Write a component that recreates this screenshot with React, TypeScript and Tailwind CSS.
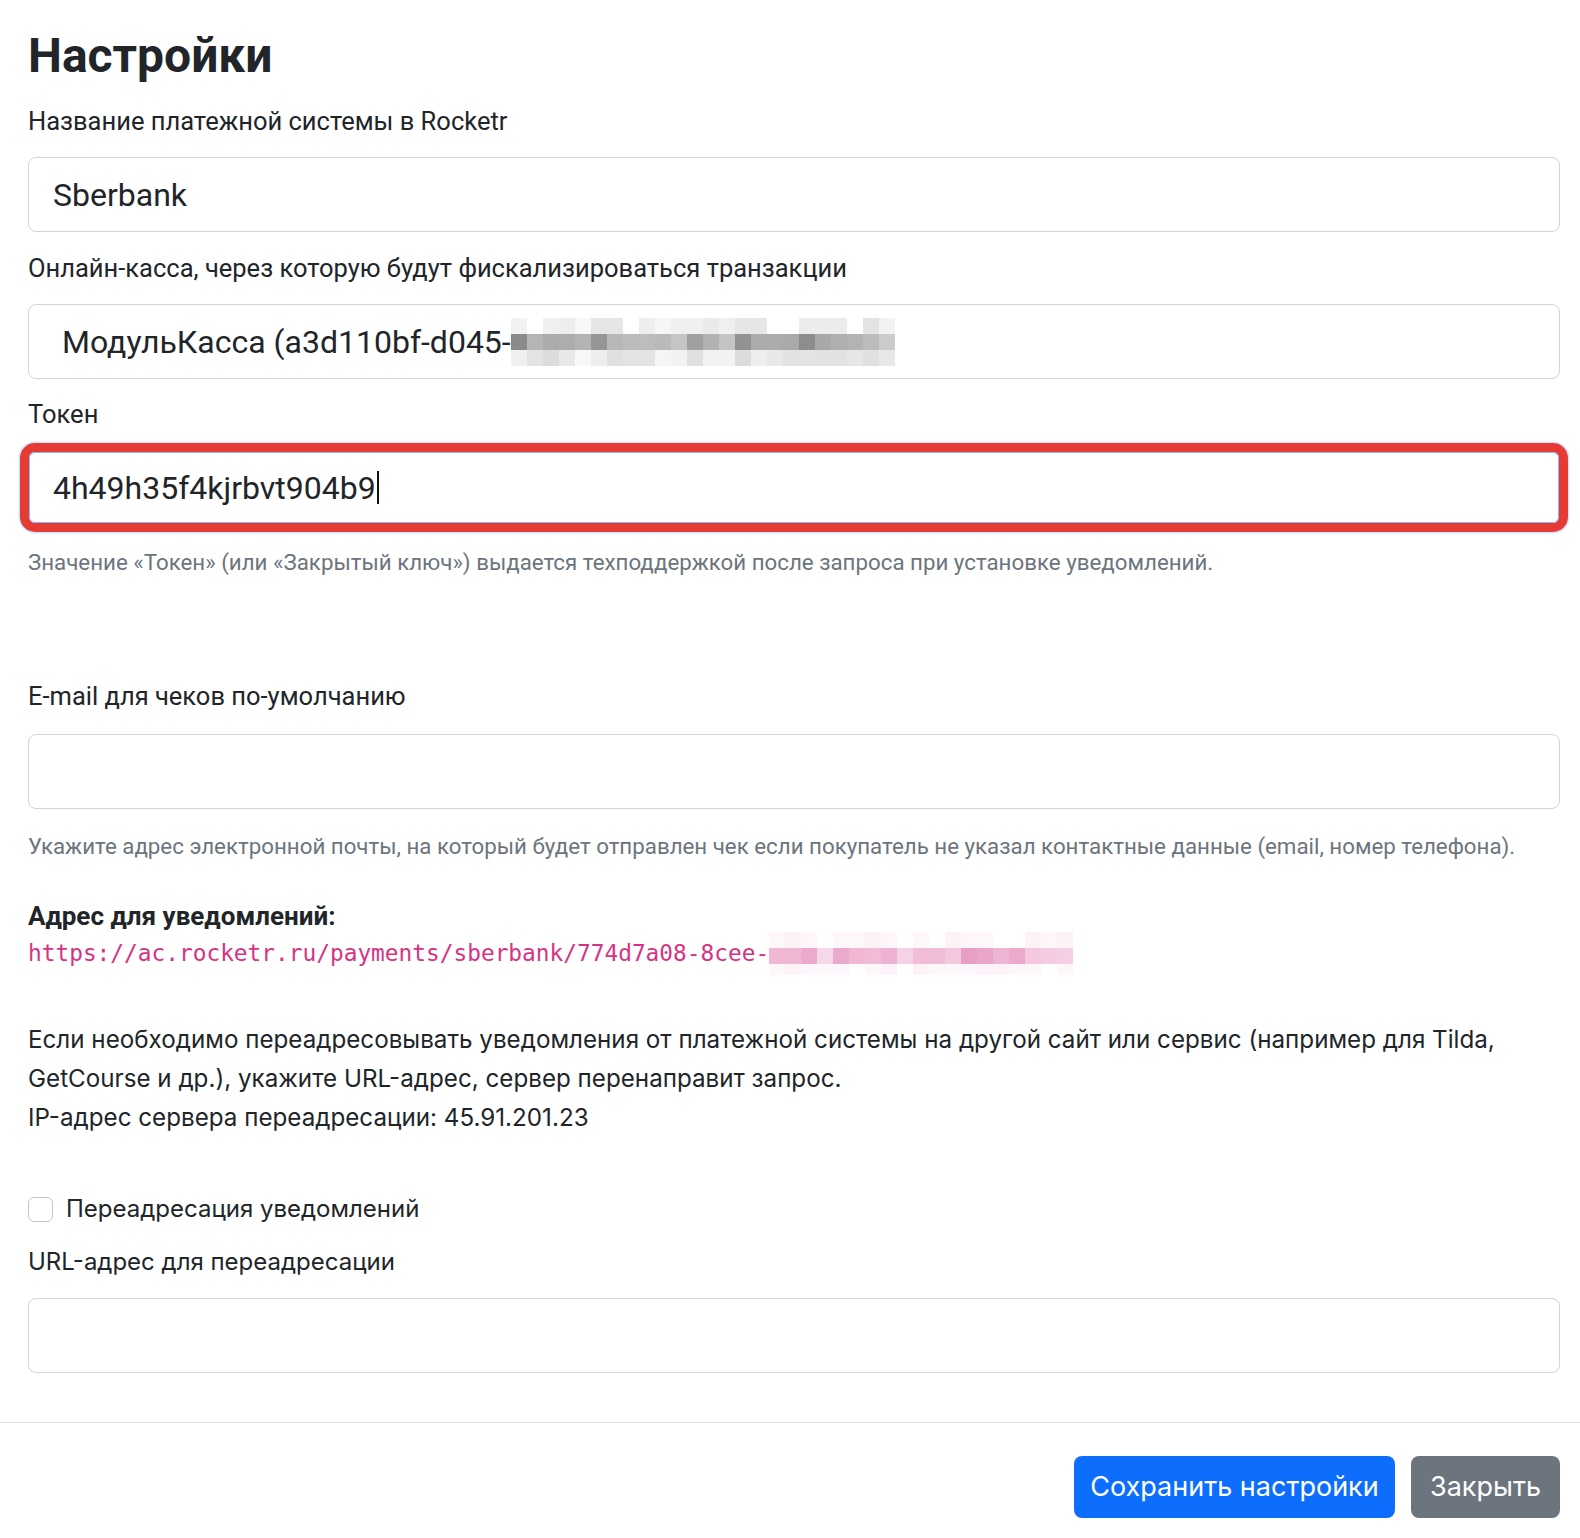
const roboto = "font-[Roboto,sans-serif]";
const inter = "font-[Inter,sans-serif]";

const greyTop = ["#f2f2f2", "#ffffff", "#f0f0f0", "#ededed", "#f8f8f8", "#e6e6e6", "#e6e6e6", "#ffffff", "#eeeeee", "#f6f6f6", "#f0f0f0", "#f0f0f0", "#eaeaea", "#f0f0f0", "#e6e6e6", "#e6e6e6", "#ffffff", "#ffffff", "#ececec", "#ececec", "#ececec", "#ffffff", "#e3e3e3", "#f2f2f2"];
const greyMid = ["#8a8a8a", "#b5b5b5", "#acacac", "#adadad", "#b3b3b3", "#959595", "#b8b8b8", "#bcbcbc", "#bdbdbd", "#bababa", "#c5c5c5", "#a0a0a0", "#b2b2b2", "#c4c4c4", "#929292", "#acacac", "#acacac", "#a9a9a9", "#8d8d8d", "#a8a8a8", "#b0b0b0", "#b3b3b3", "#bcbcbc", "#cbcbcb"];
const greyBot = ["#f0f0f0", "#e3e3e3", "#dcdcdc", "#e8e8e8", "#f8f8f8", "#eeeeee", "#e0e0e0", "#e4e4e4", "#e4e4e4", "#f5f5f5", "#f2f2f2", "#e0e0e0", "#f2f2f2", "#f2f2f2", "#dcdcdc", "#eeeeee", "#e8e8e8", "#e2e2e2", "#e4e4e4", "#e2e2e2", "#e2e2e2", "#e6e6e6", "#e0e0e0", "#e8e8e8"];

const pinkTop = ["#fdf6fa", "#fcf2f7", "#fdf6fa", "#ffffff", "#fdf6fa", "#fdf6fa", "#fcf2f7", "#fdf6fa", "#ffffff", "#fdf6fa", "#ffffff", "#fcf2f7", "#fdf6fa", "#fdf6fa", "#ffffff", "#ffffff", "#fcf2f7", "#fdf6fa", "#fcf2f7"];
const pinkMid = ["#f0b8d5", "#f0b8d5", "#eba9cc", "#f7d8e8", "#eba9cc", "#f0b8d5", "#f0bcd8", "#eeb2d2", "#f6d2e5", "#f0bcd8", "#f0bcd8", "#f4c8df", "#e89fc6", "#eaa6ca", "#efb5d4", "#eba9cc", "#f4c8df", "#f4cbe0", "#f5cfe3"];
const pinkBot = ["#fdf6fa", "#fcf2f7", "#fdf6fa", "#fdf6fa", "#fdf6fa", "#ffffff", "#fdf6fa", "#fcf2f7", "#ffffff", "#fcf2f7", "#fdf6fa", "#fdf6fa", "#fdf6fa", "#fcf2f7", "#fcf2f7", "#fdf6fa", "#fdf6fa", "#ffffff", "#fdf6fa"];

function Pixelated({ rows, w, h }: { rows: string[][]; w: number; h: number[] }) {
  return (
    <span className="inline-flex flex-col align-middle">
      {rows.map((row, i) => (
        <span key={i} className="flex">
          {row.map((c, j) => (
            <span key={j} style={{ width: w, height: h[i], background: c }} />
          ))}
        </span>
      ))}
    </span>
  );
}

function Label({ children, className = "" }: { children: React.ReactNode; className?: string }) {
  return <div className={`${roboto} text-[25.5px] leading-[36px] text-[#212529] ${className}`}>{children}</div>;
}

function Field({ children, className = "" }: { children?: React.ReactNode; className?: string }) {
  return (
    <div className={`flex h-[75px] items-center rounded-[8px] border-[1.5px] border-[#ced4da] bg-white ${roboto} text-[32px] text-[#212529] ${className}`}>
      {children}
    </div>
  );
}

export default function App() {
  return (
    <div className="min-h-[1538px] w-[1580px] bg-white">
      <div className="pl-[28px] pr-[20px] pt-[25px]">
        <h1 className={`${roboto} text-[48px] font-bold leading-[62px] text-[#212529]`}>Настройки</h1>

        <Label className="mt-[16px]">Название платежной системы в Rocketr</Label>
        <Field className="mt-[18px] pl-[24px]">Sberbank</Field>

        <Label className="mt-[18px]">Онлайн-касса, через которую будут фискализироваться транзакции</Label>
        <Field className="mt-[18px] pl-[33px]">
          <span>МодульКасса (a3d110bf-d045-</span>
          <Pixelated rows={[greyTop, greyMid, greyBot]} w={16} h={[16, 16, 16]} />
        </Field>

        <Label className="mt-[17px]">Токен</Label>
        <div className="-ml-[8px] -mr-[8px] mt-[11px] rounded-[15px] border-[9px] border-[#e53b33] shadow-[0_0_0_1.5px_rgba(13,110,253,0.2)]">
          <div className={`flex h-[71px] items-center rounded-[6px] border border-[#86b7fe] bg-white pl-[23px] ${roboto} text-[32px] text-[#212529]`}>
            <span>4h49h35f4kjrbvt904b9</span>
            <span className="ml-[1px] h-[33px] w-[2px] bg-[#111]" />
          </div>
        </div>
        <div className={`${roboto} mt-[14px] text-[22.3px] leading-[32px] text-[#6c757d]`}>
          Значение «Токен» (или «Закрытый ключ») выдается техподдержкой после запроса при установке уведомлений.
        </div>

        <Label className="mt-[100px]">E-mail для чеков по-умолчанию</Label>
        <Field className="mt-[20px]" />
        <div className={`${roboto} mt-[21px] text-[22.3px] leading-[32px] text-[#6c757d]`}>
          Укажите адрес электронной почты, на который будет отправлен чек если покупатель не указал контактные данные (email, номер телефона).
        </div>

        <div className={`${roboto} mt-[36px] text-[26px] font-bold leading-[36px] text-[#212529]`}>Адрес для уведомлений:</div>
        <div className="mt-[3px] flex h-[32px] items-center font-['DejaVu_Sans_Mono',monospace] text-[22.8px] leading-[32px] text-[#d63384]">
          <span>https://ac.rocketr.ru/payments/sberbank/774d7a08-8cee-</span>
          <Pixelated rows={[pinkTop, pinkMid, pinkBot]} w={16} h={[16, 16, 11]} />
        </div>

        <p className={`${inter} mt-[51px] text-[24.2px] leading-[39px] text-[#212529]`}>
          Если необходимо переадресовывать уведомления от платежной системы на другой сайт или сервис (например для Tilda, GetCourse и др.), укажите URL-адрес, сервер перенаправит запрос.
          <br />
          IP-адрес сервера переадресации: 45.91.201.23
        </p>

        <label className={`${inter} mt-[54px] flex items-center gap-[13px] text-[24px] leading-[36px] text-[#212529]`}>
          <span className="h-[25px] w-[25px] rounded-[6px] border-[1.5px] border-[#c4c4c4] bg-white" />
          Переадресация уведомлений
        </label>
        <div className={`${inter} mt-[17px] text-[24px] leading-[36px] text-[#212529]`}>URL-адрес для переадресации</div>
        <Field className="mt-[18px]" />
      </div>

      <div className="mt-[49px] border-t-[1.5px] border-[#dee2e6] pr-[20px] pt-[33px]">
        <div className={`${inter} flex justify-end gap-[16px] text-[27px] text-white`}>
          <button className="flex h-[62px] w-[321px] items-center justify-center rounded-[8px] bg-[#0d6efd]">Сохранить настройки</button>
          <button className="flex h-[62px] w-[149px] items-center justify-center rounded-[8px] bg-[#6c757d]">Закрыть</button>
        </div>
      </div>
    </div>
  );
}
